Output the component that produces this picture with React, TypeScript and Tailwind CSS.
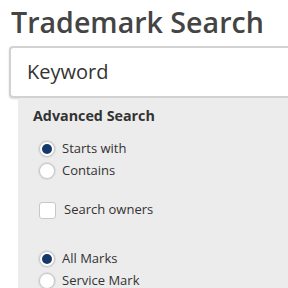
import { useState } from "react";

const Radio = ({ checked, label }: { checked?: boolean; label: string }) => (
  <label className="flex items-center gap-[7px] h-[22px] text-[13px] text-[#333]">
    <span className="w-[16px] h-[16px] rounded-full bg-white border border-[#c8c8c8] shadow-[0_0_1px_1px_rgba(0,0,0,0.08)] flex items-center justify-center">
      {checked && <span className="w-[10px] h-[10px] rounded-full bg-[#15386a]" />}
    </span>
    {label}
  </label>
);

const App = () => {
  const [keyword] = useState("");

  return (
    <div
      className="w-[288px] h-[288px] overflow-hidden bg-white"
      style={{ fontFamily: '"Open Sans", "Noto Sans", sans-serif' }}
    >
      <h1 className="pl-[11px] pt-[4px] text-[28.6px] leading-[36px] font-semibold text-[#444]">
        Trademark Search
      </h1>
      <div className="ml-[9px] mt-[6px] h-[52px] border-2 border-r-0 border-[#d2d2d2] rounded-l-[4px] bg-white flex items-center pl-[16px] shadow-[0_1px_2px_rgba(0,0,0,0.15)]">
        <span className="text-[20px] text-[#333]">{keyword || "Keyword"}</span>
      </div>
      <section className="ml-[18px] bg-[#ececec] pl-[15px] pt-[8px] pb-[20px] h-[200px]">
        <p className="text-[14.3px] font-bold text-[#333] leading-[20px]">Advanced Search</p>
        <div className="mt-[12px] pl-[6px] flex flex-col">
          <Radio checked label="Starts with" />
          <Radio label="Contains" />
        </div>
        <label className="mt-[16px] pl-[6px] flex items-center gap-[8px] h-[24px] text-[13px] text-[#333]">
          <span className="w-[17px] h-[17px] rounded-[3px] bg-white border border-[#c8c8c8]" />
          Search owners
        </label>
        <div className="mt-[26px] pl-[6px] flex flex-col">
          <Radio checked label="All Marks" />
          <Radio label="Service Mark" />
        </div>
      </section>
    </div>
  );
};

export default App;
